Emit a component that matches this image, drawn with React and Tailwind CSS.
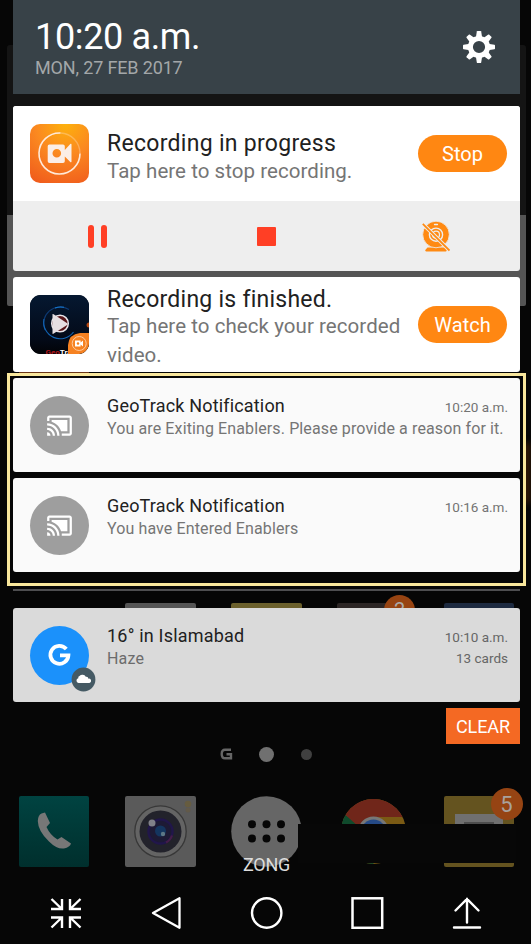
import React from "react";

function RecorderIcon() {
  return (
    <svg className="h-[59px] w-[59px] shrink-0" viewBox="0 0 59 59">
      <defs>
        <radialGradient id="rec" cx="0.6" cy="0" r="1.1">
          <stop offset="0" stopColor="#fdb10c" />
          <stop offset="0.45" stopColor="#fb8a20" />
          <stop offset="1" stopColor="#f05c1c" />
        </radialGradient>
      </defs>
      <rect width="59" height="59" rx="10" fill="url(#rec)" />
      <path d="M30.5 9A20.5 20.5 0 1 0 50 29.5" fill="none" stroke="#ffe9d8" strokeWidth="1.6" />
      <path d="M30.5 9A20.5 20.5 0 0 1 50 29.5" fill="none" stroke="#ffd9b0" strokeOpacity="0.4" strokeWidth="1.4" />
      <path
        fillRule="evenodd"
        fill="#fbeee6"
        d="M19.5 20.5h13.5a1.8 1.8 0 0 1 1.8 1.8v3.6l5.5-5.9a.7.7 0 0 1 1.2.5v17a.7.7 0 0 1-1.2.5l-5.5-5.6v4.8a1.8 1.8 0 0 1-1.8 1.8H19.5a1.8 1.8 0 0 1-1.8-1.8V22.3a1.8 1.8 0 0 1 1.8-1.8zM26.8 25a4.3 4.3 0 1 0 0 8.6 4.3 4.3 0 0 0 0-8.6z"
      />
    </svg>
  );
}

function VideoThumb() {
  return (
    <div className="relative h-[59px] w-[59px] shrink-0 overflow-hidden rounded-[11px] bg-[#040912]">
      <svg className="absolute inset-0" width="59" height="59" viewBox="0 0 59 59">
        <defs>
          <linearGradient id="navy" x1="0" y1="0" x2="0" y2="1">
            <stop offset="0" stopColor="#051831" />
            <stop offset="0.75" stopColor="#030a18" />
            <stop offset="1" stopColor="#020306" />
          </linearGradient>
        </defs>
        <rect width="59" height="59" fill="url(#navy)" />
        <path d="M39 14.500A16.500 16.500 0 0 0 15 35" fill="none" stroke="#0d3a74" strokeWidth="1.1" />
        <path d="M25 13A16.500 16.500 0 0 1 34 12.300" fill="none" stroke="#1678cf" strokeWidth="1.1" />
        <path d="M14 24A16.500 16.500 0 0 0 43.500 37" fill="none" stroke="#1264b4" strokeWidth="1.1" />
        <circle cx="30" cy="28.500" r="8.300" fill="#5a171a" stroke="#e9e6ea" strokeWidth="1.500" />
        <path d="M22.500 19.500v19q0 .8.800.300L37.500 29.800q.8-.6 0-1.200L23.600 19.300q-1-.6-1.100.200z" fill="#e6dfe2" />
        <circle cx="59" cy="30" r="2.500" fill="#b4460f" />
      </svg>
      <div className="absolute top-[53px] left-[15.5px] text-[8px] leading-[9px] font-bold whitespace-nowrap text-white">
        <span className="text-[#b3171c]">Geo</span>Track
      </div>
      <svg className="absolute right-0 bottom-0" width="21" height="21" viewBox="0 0 21 21">
        <path d="M0 21V12Q1 1 12 0h9v21z" fill="#f68222" />
        <circle cx="11.200" cy="10.500" r="7" fill="none" stroke="#ffd3ac" strokeWidth="0.900" />
        <path fillRule="evenodd" d="M7 7.500h5.600v2l2.400-2v6l-2.400-2v2H7zM10 9.200a1.300 1.300 0 1 0 0 2.600 1.300 1.300 0 0 0 0-2.600z" fill="#fff" />
      </svg>
    </div>
  );
}

function CastIcon() {
  return (
    <div className="flex h-[59px] w-[59px] shrink-0 items-center justify-center rounded-full bg-[#9e9e9e]">
      <svg width="27" height="27" viewBox="0 0 24 24" fill="#fff">
        <path d="M1 18v3h3c0-1.660-1.340-3-3-3zm0-4v2c2.760 0 5 2.240 5 5h2c0-3.870-3.130-7-7-7zm18-7H5v1.630c3.960 1.280 7.090 4.410 8.370 8.370H19V7zM1 10v2c4.970 0 9 4.030 9 9h2c0-6.080-4.930-11-11-11zm20-7H3c-1.100 0-2 .9-2 2v3h2V5h18v14h-7v2h7c1.100 0 2-.9 2-2V5c0-1.100-.9-2-2-2z" />
      </svg>
    </div>
  );
}

function GoogleIcon() {
  return (
    <div className="relative h-[59px] w-[59px] shrink-0 rounded-full bg-[#1b91fb]">
      <svg className="absolute inset-0" width="59" height="59" viewBox="0 0 59 59">
        <path d="M36.300 23A9 9 0 1 0 38.400 29.300H30" fill="none" stroke="#fff" strokeWidth="3.800" />
      </svg>
      <svg className="absolute top-[41px] left-[41px]" width="25" height="25" viewBox="0 0 25 25">
        <circle cx="12.500" cy="12.500" r="11.900" fill="#455a64" />
        <path d="M7.500 16a2.400 2.400 0 0 1-.2-4.700 1.800 1.800 0 0 1 1.200-2.200 3.800 3.800 0 0 1 6.300.6 2.200 2.200 0 0 1 2.600 2 2.200 2.200 0 0 1 1 4.300z" fill="#fff" />
      </svg>
    </div>
  );
}

function Gear() {
  return (
    <svg width="32" height="32" viewBox="0 0 32 32" fill="#fff">
      {[0, 45, 90, 135, 180, 225, 270, 315].map((a) => (
        <path key={a} d="M12.800 7L13.800.6q.1-.6.700-.6h3q.6 0 .7.600L19.200 7z" transform={`rotate(${a} 16 16)`} />
      ))}
      <circle cx="16" cy="16" r="8.600" fill="none" stroke="#fff" strokeWidth="5" />
    </svg>
  );
}

function Webcam() {
  return (
    <svg width="28" height="31" viewBox="0 0 28 31">
      <path d="M5.500 26.500h17l2.200 2.600q.5 1.400-1 1.400H4.300q-1.500 0-1-1.400z" fill="#ff8a12" />
      <circle cx="14" cy="13.500" r="13.300" fill="#ff8a12" stroke="#eee" strokeWidth="0.800" />
      <circle cx="14" cy="13.700" r="6.600" fill="none" stroke="#eee" strokeWidth="1.400" />
      <circle cx="14" cy="13.700" r="3.500" fill="none" stroke="#eee" strokeWidth="1.200" />
      <path d="M12.500 3.500h3" stroke="#eee" strokeWidth="1.300" strokeLinecap="round" />
      <path d="M.5 2.500L27.500 29.500" stroke="#eee" strokeWidth="3.800" />
      <path d="M.8 2.800L27.500 29.500" stroke="#ff8a12" strokeWidth="1.800" />
    </svg>
  );
}

function Pill({ children }) {
  return (
    <div className="flex h-[37px] w-[89px] shrink-0 items-center justify-center rounded-full bg-[#ff8712] text-[20px] leading-none text-white">
      <span>{children}</span>
    </div>
  );
}

function GeoCard({ time, text, className }) {
  return (
    <div className={`flex h-[94px] rounded-[3px] bg-[#fafafa] pt-[17.5px] pr-3 pl-[17px] ${className}`}>
      <CastIcon />
      <div className="ml-[18px] min-w-0 flex-1">
        <div className="flex justify-between">
          <span className="text-[18px] leading-5 tracking-[0.17px] text-[#212121]">GeoTrack Notification</span>
          <span className="pt-px text-[13.5px] leading-5 text-[#737373]">{time}</span>
        </div>
        <div className="text-[16px] leading-6 tracking-[0.115px] whitespace-nowrap text-[#757575]">{text}</div>
      </div>
    </div>
  );
}

function Wallpaper() {
  return (
    <div className="absolute inset-0 bg-[#060606]">
      <div className="absolute top-[45px] left-[7px] h-[170px] w-[519px] rounded-t-[3px] bg-[#141414]" />
      <div className="absolute top-[215px] left-[7px] h-[91px] w-[519px] rounded-b-[2px] bg-[#555]" />
      <div className="absolute top-[371px] left-[19px] h-5 w-[70px] bg-[#6b3617]" />
      <div className="absolute top-[443px] left-[510px] h-[60px] w-[21px] bg-linear-to-r from-[#1c0d03] to-[#351c08] blur-[3px]" />
      <div className="absolute top-[603px] left-[125px] h-5 w-[71px] rounded-[2px] bg-[#555]" />
      <div className="absolute top-[603px] left-[231px] h-5 w-[71px] rounded-[2px] bg-[#6b602c]" />
      <div className="absolute top-[603px] left-[337px] h-5 w-[71px] rounded-[2px] bg-[#2c2625]" />
      <div className="absolute top-[603px] left-[444px] h-5 w-[70px] rounded-[2px] bg-[#1d2a40]" />
      <div className="absolute top-[595px] left-[384px] h-[31px] w-[31px] rounded-full bg-[#974412] pt-[3px] text-center text-[20px] leading-[25px] text-[#aaa]">2</div>
    </div>
  );
}

function Dock() {
  return (
    <div className="relative mt-[34px] ml-[6px] flex h-[71px] w-[495px] items-start justify-between">
      <div className="flex h-[71px] w-[70px] items-center justify-center rounded-[2px] bg-linear-to-b from-[#004341] to-[#002f2d]">
        <svg width="70" height="71" viewBox="0 0 70 71">
          <path d="M22.500 17.500L26 16.500L31 27L27.500 31Q31 39 38.500 43.500L42.500 41L52 47.500Q51 51 45 52.500Q38 53.500 30 45.500Q19 35 18.800 25Q19 19 22.500 17.500z" fill="#777" />
        </svg>
      </div>
      <svg width="71" height="71" viewBox="0 0 71 71">
        <rect width="71" height="71" rx="2" fill="#5a5a5a" />
        <circle cx="35.500" cy="35.500" r="25.700" fill="#646464" stroke="#383838" strokeWidth="1.300" />
        <circle cx="35.500" cy="35.500" r="21" fill="#22222b" />
        <circle cx="35.500" cy="35.500" r="12" fill="#1d1a35" stroke="#21164b" strokeWidth="2.400" />
        <path d="M41 46.500a12 12 0 0 0 6-7" stroke="#451d49" strokeWidth="2.200" fill="none" />
        <circle cx="35.500" cy="35" r="5.500" fill="#14355f" />
        <circle cx="27" cy="27" r="3.500" fill="#808088" />
        <circle cx="38" cy="38" r="2.200" fill="#5d7786" />
        <circle cx="63" cy="8" r="3.300" fill="#665c40" />
        <circle cx="63" cy="14" r="2.500" fill="#625a4a" />
      </svg>
      <svg width="71" height="71" viewBox="0 0 71 71">
        <circle cx="35.500" cy="35.500" r="35.300" fill="#666" />
        {[28.2, 42.5].map((y) => [21, 35.5, 50].map((x) => <circle key={`${x}-${y}`} cx={x} cy={y} r="4" fill="#060606" />))}
      </svg>
      <svg width="71" height="71" viewBox="0 0 71 71">
        <circle cx="35.500" cy="35.500" r="32.500" fill="#7a5a14" />
        <path d="M35.500 35.500L7.500 19A32.500 32.500 0 0 0 35.500 68z" fill="#0f4a2c" />
        <path d="M7.500 19A32.500 32.500 0 0 1 64.500 21H35.500A15 15 0 0 0 21 31z" fill="#70261a" />
        <circle cx="35.500" cy="36" r="15.500" fill="#777" />
        <circle cx="35.500" cy="36" r="12.500" fill="#254a86" />
      </svg>
      <svg width="70" height="71" viewBox="0 0 70 71">
        <rect width="70" height="71" rx="2" fill="#64531f" />
        <rect x="11" y="18" width="48" height="35" fill="#707070" />
        <path d="M20 27h30" stroke="#4d4d4d" strokeWidth="2" />
      </svg>
      <div className="absolute top-[27.5px] left-[279px] h-[39px] w-[218px] bg-[#070707]" />
      <div className="absolute -top-[8px] left-[471.5px] h-[32px] w-[32px] rounded-full bg-[#964413] text-center text-[22px] leading-[33px] text-[#a9a29d]">5</div>
      <div className="absolute top-[58px] left-[204px] w-[87px] text-center text-[18px] leading-[22px] tracking-[-0.2px] text-[#ddd]">ZONG</div>
    </div>
  );
}

function NavBar() {
  return (
    <div className="mt-[30px] ml-[36px] flex h-[32px] w-[436px] items-center justify-between">
      <svg width="34" height="32" viewBox="0 0 34 32" fill="none" stroke="#fff" strokeWidth="2.400">
        <path d="M2.500 2L12.300 11.500M2 12H13V2M31.500 2L21.700 11.500M32 12H21V2M2.500 30.500L12.300 21M2 20.500H13V31M31.500 30.500L21.700 21M32 20.500H21V31" />
      </svg>
      <svg width="34" height="32" viewBox="0 0 34 32" fill="none" stroke="#fff" strokeWidth="2.300" strokeLinejoin="round">
        <path d="M3 16L29.500 1.200V30.800z" />
      </svg>
      <svg width="34" height="32" viewBox="0 0 34 32" fill="none" stroke="#fff" strokeWidth="2.400">
        <circle cx="16.700" cy="16" r="14.700" />
      </svg>
      <svg width="34" height="32" viewBox="0 0 34 32" fill="none" stroke="#fff" strokeWidth="2.500">
        <rect x="1.500" y="1.300" width="29.700" height="29.500" />
      </svg>
      <svg width="34" height="32" viewBox="0 0 34 32" fill="none" stroke="#fff" strokeWidth="2.400" strokeLinecap="round">
        <path d="M16 2V25.500M4.500 13.500L16 2L27.500 13.500M3 30.500H29" />
      </svg>
    </div>
  );
}

export default function App() {
  return (
    <div className="relative h-[944px] w-[531px] overflow-hidden bg-black font-[Roboto,sans-serif]">
      <Wallpaper />
      <div className="relative mx-[13px] w-[507px]">
        <header className="flex h-[94px] justify-between bg-[#384248] pr-[25px] pl-[22px]">
          <div className="pt-[17px] whitespace-nowrap">
            <div className="text-[36px] leading-10 tracking-[-0.35px] text-white">10:20 a.m.</div>
            <div className="mt-px text-[18px] leading-5 tracking-[-0.15px] text-[#a3a7a9]">MON, 27 FEB 2017</div>
          </div>
          <div className="pt-[31px]"><Gear /></div>
        </header>

        <section className="mt-3 h-[165px] overflow-hidden rounded-[3px] bg-[#eee]">
          <div className="flex h-[95px] items-start bg-white pr-[13px] pl-[17px]">
            <div className="pt-[18px]"><RecorderIcon /></div>
            <div className="ml-[18px] flex-1 pt-[23.5px] whitespace-nowrap">
              <div className="text-[23px] leading-7 tracking-[0.29px] text-[#212121]">Recording in progress</div>
              <div className="-mt-px text-[20.5px] leading-7 tracking-[0.05px] text-[#757575]">Tap here to stop recording.</div>
            </div>
            <div className="pt-[29px]"><Pill>Stop</Pill></div>
          </div>
          <div className="flex h-[70px] items-center">
            <div className="flex flex-1 justify-center gap-[7px]">
              <div className="h-[23px] w-[6px] rounded-full bg-[#ff3f25]" />
              <div className="h-[23px] w-[6px] rounded-full bg-[#ff3f25]" />
            </div>
            <div className="flex flex-1 justify-center"><div className="h-[19px] w-[19px] rounded-[1px] bg-[#ff3f25]" /></div>
            <div className="flex flex-1 justify-center"><Webcam /></div>
          </div>
        </section>

        <section className="mt-[6px] flex h-[94.5px] items-start rounded-[3px] bg-white pr-[13px] pl-[17px]">
          <div className="pt-[18px]"><VideoThumb /></div>
          <div className="ml-[18px] flex-1 pt-[10.5px] whitespace-nowrap">
            <div className="text-[23px] leading-6 tracking-[0.25px] text-[#212121]">Recording is finished.</div>
            <div className="text-[20.5px] leading-[29.5px] tracking-[0.06px] text-[#757575]">Tap here to check your recorded<br />video.</div>
          </div>
          <div className="pt-[29px]"><Pill>Watch</Pill></div>
        </section>

        <div className="-mx-[6px] mt-[1.5px] h-[213px] border-[3px] border-[#f9e79c] bg-[#060606] px-[3px] pt-[2px]">
          <GeoCard time="10:20 a.m." text="You are Exiting Enablers. Please provide a reason for it." className="" />
          <GeoCard time="10:16 a.m." text="You have Entered Enablers" className="mt-[6px]" />
        </div>
        <div className="mt-[3px] h-[2px] bg-[#4e4e50]" />

        <section className="mt-[17px] flex h-[94px] rounded-[3px] bg-[#dadada] pt-[17.5px] pr-3 pl-[17px]">
          <GoogleIcon />
          <div className="ml-[18px] flex-1">
            <div className="text-[18px] leading-5 tracking-[0.2px] text-[#212121]">16° in Islamabad</div>
            <div className="mt-px text-[16px] leading-6 tracking-[0.15px] text-[#6c6c6c]">Haze</div>
          </div>
          <div className="pt-px text-right text-[13.5px] leading-[21.5px] text-[#666]">
            <div>10:10 a.m.</div>
            <div>13 cards</div>
          </div>
        </section>

        <div className="mt-[6px] ml-auto flex h-[36px] w-[74px] items-center justify-center bg-[#f46923] pt-px text-[18px] leading-none tracking-[-0.1px] text-white">CLEAR</div>

        <div className="mt-[2px] ml-[207px] flex h-[16px] w-[92px] items-center justify-between">
          <svg width="13" height="12" viewBox="0 0 13 12" fill="none" stroke="#666" strokeWidth="2.400">
            <path d="M11 1.700H5Q1.700 1.700 1.700 6T5 10.300H11V6.300H6.500" />
          </svg>
          <div className="-ml-px h-[15px] w-[15px] rounded-full bg-[#707070]" />
          <div className="h-[11px] w-[11px] rounded-full bg-[#404040]" />
        </div>
        <Dock />
        <NavBar />
      </div>
    </div>
  );
}
